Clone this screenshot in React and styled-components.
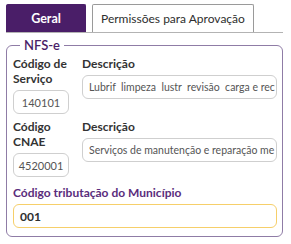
import React from "react";
import styled, { createGlobalStyle } from "styled-components";

const Global = createGlobalStyle`
  html, body { margin: 0; padding: 0; background: #ffffff; }
  body { font-family: "Lato", "Open Sans", sans-serif; }
  * { box-sizing: border-box; }
`;

const Page = styled.div`
  width: 291px;
  height: 244px;
  padding: 4px 8px 0 6px;
`;

const TabBar = styled.div`
  display: flex;
  gap: 6px;
  border-bottom: 1px solid #b3b3b3;
`;

const Tab = styled.div`
  height: 28px;
  display: flex;
  align-items: center;
  justify-content: center;
  font-size: ${(p) => (p.$active ? "12.5px" : "12px")};
  padding: ${(p) => (p.$active ? "0" : "0 8px")};
  width: ${(p) => (p.$active ? "80px" : "auto")};
  background: ${(p) => (p.$active ? "#4a1e68" : "#ffffff")};
  color: ${(p) => (p.$active ? "#ffffff" : "#2e2e2e")};
  font-weight: ${(p) => (p.$active ? 700 : 400)};
  border: 1px solid ${(p) => (p.$active ? "#4a1e68" : "#9a9a9a")};
  border-bottom: none;
  border-radius: 2px 2px 0 0;
`;

const Fieldset = styled.fieldset`
  margin: 6px 0 0 0;
  padding: 4px 5px 8px 6px;
  border: 1.5px solid #8f7ca6;
  border-radius: 6px;
  min-width: 0;
`;

const Legend = styled.legend`
  color: #4a1e68;
  font-size: 13px;
  font-weight: 600;
  padding: 0 4px;
  margin-left: 7px;
  line-height: 13px;
`;

const Grid = styled.div`
  display: grid;
  grid-template-columns: 56px 1fr;
  column-gap: 13px;
  row-gap: 5px;
`;

const Field = styled.div`
  display: flex;
  flex-direction: column;
  gap: 4px;
  grid-column: ${(p) => (p.$full ? "1 / -1" : "auto")};
  min-width: 0;
  margin-top: ${(p) => (p.$mt || 0)}px;
`;

const Label = styled.label`
  font-size: 12px;
  font-weight: 700;
  line-height: 15px;
  white-space: nowrap;
  color: ${(p) => (p.$accent ? "#5a2d7c" : "#333333")};
`;

const Input = styled.div`
  height: 24px;
  display: flex;
  align-items: center;
  justify-content: ${(p) => (p.$center ? "center" : "flex-start")};
  padding: 0 6px;
  border: ${(p) => (p.$focus ? "1.5px solid #f6cf6a" : "1px solid #cfcfcf")};
  border-radius: 6px;
  font-size: ${(p) => (p.$bold ? "12px" : p.$center ? "11px" : "10.5px")};
  font-weight: ${(p) => (p.$bold ? 700 : 400)};
  color: ${(p) => (p.$bold ? "#2e2e2e" : "#555555")};
  white-space: pre;
  overflow: hidden;
  background: #ffffff;
`;

export default function App() {
  return (
    <Page>
      <Global />
      <TabBar>
        <Tab $active>Geral</Tab>
        <Tab>Permissões para Aprovação</Tab>
      </TabBar>
      <Fieldset>
        <Legend>NFS-e</Legend>
        <Grid>
          <Field>
            <Label>
              Código de
              <br />
              Serviço
            </Label>
            <Input $center>140101</Input>
          </Field>
          <Field>
            <Label>Descrição</Label>
            <Input>Lubrif  limpeza  lustr  revisão  carga e rec</Input>
          </Field>
          <Field>
            <Label>
              Código
              <br />
              CNAE
            </Label>
            <Input $center>4520001</Input>
          </Field>
          <Field>
            <Label>Descrição</Label>
            <Input>Serviços de manutenção e reparação me</Input>
          </Field>
          <Field $full $mt={3}>
            <Label $accent>Código tributação do Município</Label>
            <Input $focus $bold>001</Input>
          </Field>
        </Grid>
      </Fieldset>
    </Page>
  );
}
